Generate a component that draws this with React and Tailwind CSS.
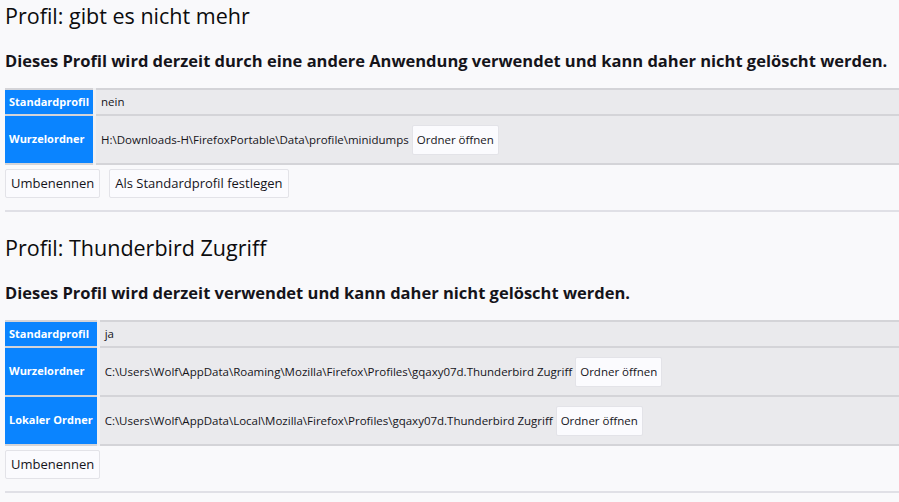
import React from 'react';

const profiles = [
  {
    name: 'gibt es nicht mehr',
    note: 'Dieses Profil wird derzeit durch eine andere Anwendung verwendet und kann daher nicht gelöscht werden.',
    isDefault: false,
    rootDir: 'H:\\Downloads-H\\FirefoxPortable\\Data\\profile\\minidumps',
    localDir: null,
  },
  {
    name: 'Thunderbird Zugriff',
    note: 'Dieses Profil wird derzeit verwendet und kann daher nicht gelöscht werden.',
    isDefault: true,
    rootDir: 'C:\\Users\\Wolf\\AppData\\Roaming\\Mozilla\\Firefox\\Profiles\\gqaxy07d.Thunderbird Zugriff',
    localDir: 'C:\\Users\\Wolf\\AppData\\Local\\Mozilla\\Firefox\\Profiles\\gqaxy07d.Thunderbird Zugriff',
  },
];

const Button = ({ children, small }) => (
  <button
    className={`bg-[#fbfbfe] border border-[#e3e3e8] rounded-[2px] text-[#15141a] leading-none whitespace-nowrap ${
      small ? 'text-[11.5px] px-[4px] h-[30px]' : 'text-[13px] px-[5px] h-[29px]'
    }`}
  >
    {children}
  </button>
);

const Row = ({ label, children, tall }) => (
  <tr className="border-y-2 border-[#d4d4d8]">
    <th className="w-px bg-[#0a84ff] text-white text-[11px] font-bold text-left px-[4px] whitespace-nowrap border-r-[3px] border-r-[#f0f0f2]">
      {label}
    </th>
    <td className={`bg-[#eaeaed] px-[5px] text-[11.5px] text-[#15141a] whitespace-nowrap ${tall ? 'h-[49px]' : 'h-[26px]'}`}>
      {children}
    </td>
  </tr>
);

const ProfileSection = ({ profile }) => (
  <div>
    <h2 className="text-[21.5px] leading-[30px] text-[#0c0c0d] pt-[1px]">Profil: {profile.name}</h2>
    <h3 className="text-[16.5px] font-bold leading-[22px] text-[#15141a] mt-[19px]">{profile.note}</h3>
    <table className="w-full border-collapse mt-[16px]">
      <tbody>
        <Row label="Standardprofil">{profile.isDefault ? 'ja' : 'nein'}</Row>
        <Row label="Wurzelordner" tall>
          <span className="inline-flex items-center gap-[3px]">
            {profile.rootDir}
            <Button small>Ordner öffnen</Button>
          </span>
        </Row>
        {profile.localDir && (
          <Row label="Lokaler Ordner" tall>
            <span className="inline-flex items-center gap-[3px]">
              {profile.localDir}
              <Button small>Ordner öffnen</Button>
            </span>
          </Row>
        )}
      </tbody>
    </table>
    <div className="flex gap-[9px] mt-[4px]">
      <Button>Umbenennen</Button>
      {!profile.isDefault && <Button>Als Standardprofil festlegen</Button>}
    </div>
    <hr className="border-t-2 border-[#e0e0e6] mt-[12px] mb-[20px]" />
  </div>
);

export default function App() {
  return (
    <div className="w-[899px] h-[502px] overflow-hidden bg-[#f9f9fb] font-['Open_Sans',sans-serif]">
      <div className="w-[1000px] pl-[5px]">
        {profiles.map((p) => (
          <ProfileSection key={p.name} profile={p} />
        ))}
      </div>
    </div>
  );
}
